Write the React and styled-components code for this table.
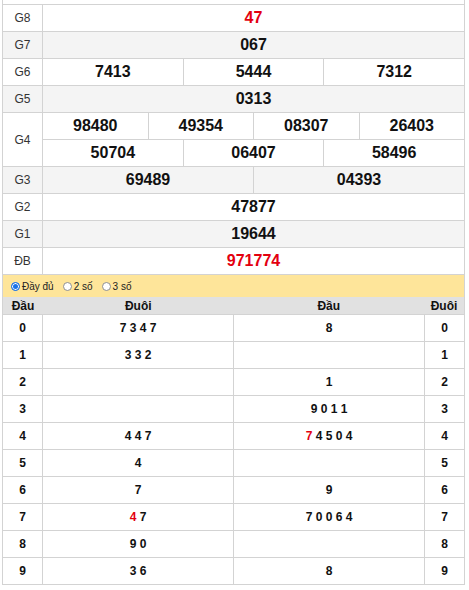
import styled, { createGlobalStyle } from 'styled-components'

const GlobalStyle = createGlobalStyle`
    body {
        margin: 0;
        background: #fff;
        font-family: "Liberation Sans", Arial, sans-serif;
    }
`

const prizes = [
    { label: 'G8', rows: [['47']], red: true },
    { label: 'G7', rows: [['067']] },
    { label: 'G6', rows: [['7413', '5444', '7312']] },
    { label: 'G5', rows: [['0313']] },
    { label: 'G4', rows: [['98480', '49354', '08307', '26403'], ['50704', '06407', '58496']] },
    { label: 'G3', rows: [['69489', '04393']] },
    { label: 'G2', rows: [['47877']] },
    { label: 'G1', rows: [['19644']] },
    { label: 'ĐB', rows: [['971774']], red: true },
]

// [đuôi list for đầu i, đầu list for đuôi i]; "*" marks a red digit
const loto = [
    ['7 3 4 7', '8'],
    ['3 3 2', ''],
    ['', '1'],
    ['', '9 0 1 1'],
    ['4 4 7', '*7 4 5 0 4'],
    ['4', ''],
    ['7', '9'],
    ['*4 7', '7 0 0 6 4'],
    ['9 0', ''],
    ['3 6', '8'],
]

const Digits = ({ text }) => {
    if (text.startsWith('*')) {
        return (
            <>
                <Red>{text[1]}</Red>
                {text.slice(2)}
            </>
        )
    }
    return text
}

const App = () => {
    return (
        <Page>
            <GlobalStyle />
            <Board>
                <TopStrip />
                {prizes.map((p, i) => (
                    <PrizeRow key={p.label} $shade={i % 2 === 1}>
                        <Label>{p.label}</Label>
                        <Values>
                            {p.rows.map((r, j) => (
                                <SubRow key={j} $split={j > 0}>
                                    {r.map((n) => (
                                        <Num key={n} $red={p.red}>{n}</Num>
                                    ))}
                                </SubRow>
                            ))}
                        </Values>
                    </PrizeRow>
                ))}
                <Options>
                    <Option><Radio $checked />Đầy đủ</Option>
                    <Option><Radio />2 số</Option>
                    <Option><Radio />3 số</Option>
                </Options>
                <HeadRow>
                    <HeadCell $narrow>Đầu</HeadCell>
                    <HeadCell>Đuôi</HeadCell>
                    <HeadCell>Đầu</HeadCell>
                    <HeadCell $narrow>Đuôi</HeadCell>
                </HeadRow>
                {loto.map((l, i) => (
                    <LotoRow key={i}>
                        <LotoCell $narrow>{i}</LotoCell>
                        <LotoCell><Digits text={l[0]} /></LotoCell>
                        <LotoCell><Digits text={l[1]} /></LotoCell>
                        <LotoCell $narrow>{i}</LotoCell>
                    </LotoRow>
                ))}
            </Board>
        </Page>
    )
}

const Page = styled.div`
    padding-left: 2px;
`

const Board = styled.div`
    width: 461px;
    border-left: 1px solid #d3d3d3;
    border-right: 1px solid #d3d3d3;
    border-bottom: 1px solid #d3d3d3;
`

const TopStrip = styled.div`
    height: 4px;
`

const PrizeRow = styled.div`
    display: flex;
    border-top: 1px solid #d3d3d3;
    background: ${(p) => (p.$shade ? '#f4f4f4' : '#fff')};
`

const Label = styled.div`
    width: 39px;
    flex: none;
    border-right: 1px solid #d3d3d3;
    display: flex;
    align-items: center;
    justify-content: center;
    font-size: 12px;
    color: #333;
`

const Values = styled.div`
    flex: 1;
    display: flex;
    flex-direction: column;
`

const SubRow = styled.div`
    display: flex;
    height: 26px;
    border-top: ${(p) => (p.$split ? '1px solid #d3d3d3' : 'none')};
`

const Num = styled.div`
    flex: 1;
    display: flex;
    align-items: center;
    justify-content: center;
    font-size: 16px;
    font-weight: bold;
    color: ${(p) => (p.$red ? '#e3000f' : '#111')};

    & + & {
        border-left: 1px solid #d3d3d3;
    }
`

const Options = styled.div`
    display: flex;
    align-items: center;
    gap: 9px;
    height: 22px;
    padding-left: 8px;
    border-top: 1px solid #d3d3d3;
    background: #fee59a;
    font-size: 10px;
    color: #222;
`

const Option = styled.label`
    display: flex;
    align-items: center;
    gap: 2px;
`

const Radio = styled.span`
    width: 7px;
    height: 7px;
    border-radius: 50%;
    border: 1px solid ${(p) => (p.$checked ? '#1a73e8' : '#8f8f8f')};
    background: ${(p) => (p.$checked ? '#1a73e8' : '#fff')};
    box-shadow: ${(p) => (p.$checked ? 'inset 0 0 0 1px #fff' : 'none')};
`

const HeadRow = styled.div`
    display: flex;
    height: 17px;
    background: #e1e1e1;
`

const HeadCell = styled.div`
    flex: ${(p) => (p.$narrow ? '0 0 40px' : '1')};
    display: flex;
    align-items: center;
    justify-content: center;
    font-size: 12px;
    font-weight: bold;
    color: #111;
`

const LotoRow = styled.div`
    display: flex;
    height: 26px;
    border-top: 1px solid #d3d3d3;
`

const LotoCell = styled.div`
    flex: ${(p) => (p.$narrow ? '0 0 39px' : '1')};
    display: flex;
    align-items: center;
    justify-content: center;
    font-size: 12px;
    font-weight: bold;
    color: #111;
    white-space: pre;

    & + & {
        border-left: 1px solid #d3d3d3;
    }
`

const Red = styled.span`
    color: #e3000f;
`

export default App
